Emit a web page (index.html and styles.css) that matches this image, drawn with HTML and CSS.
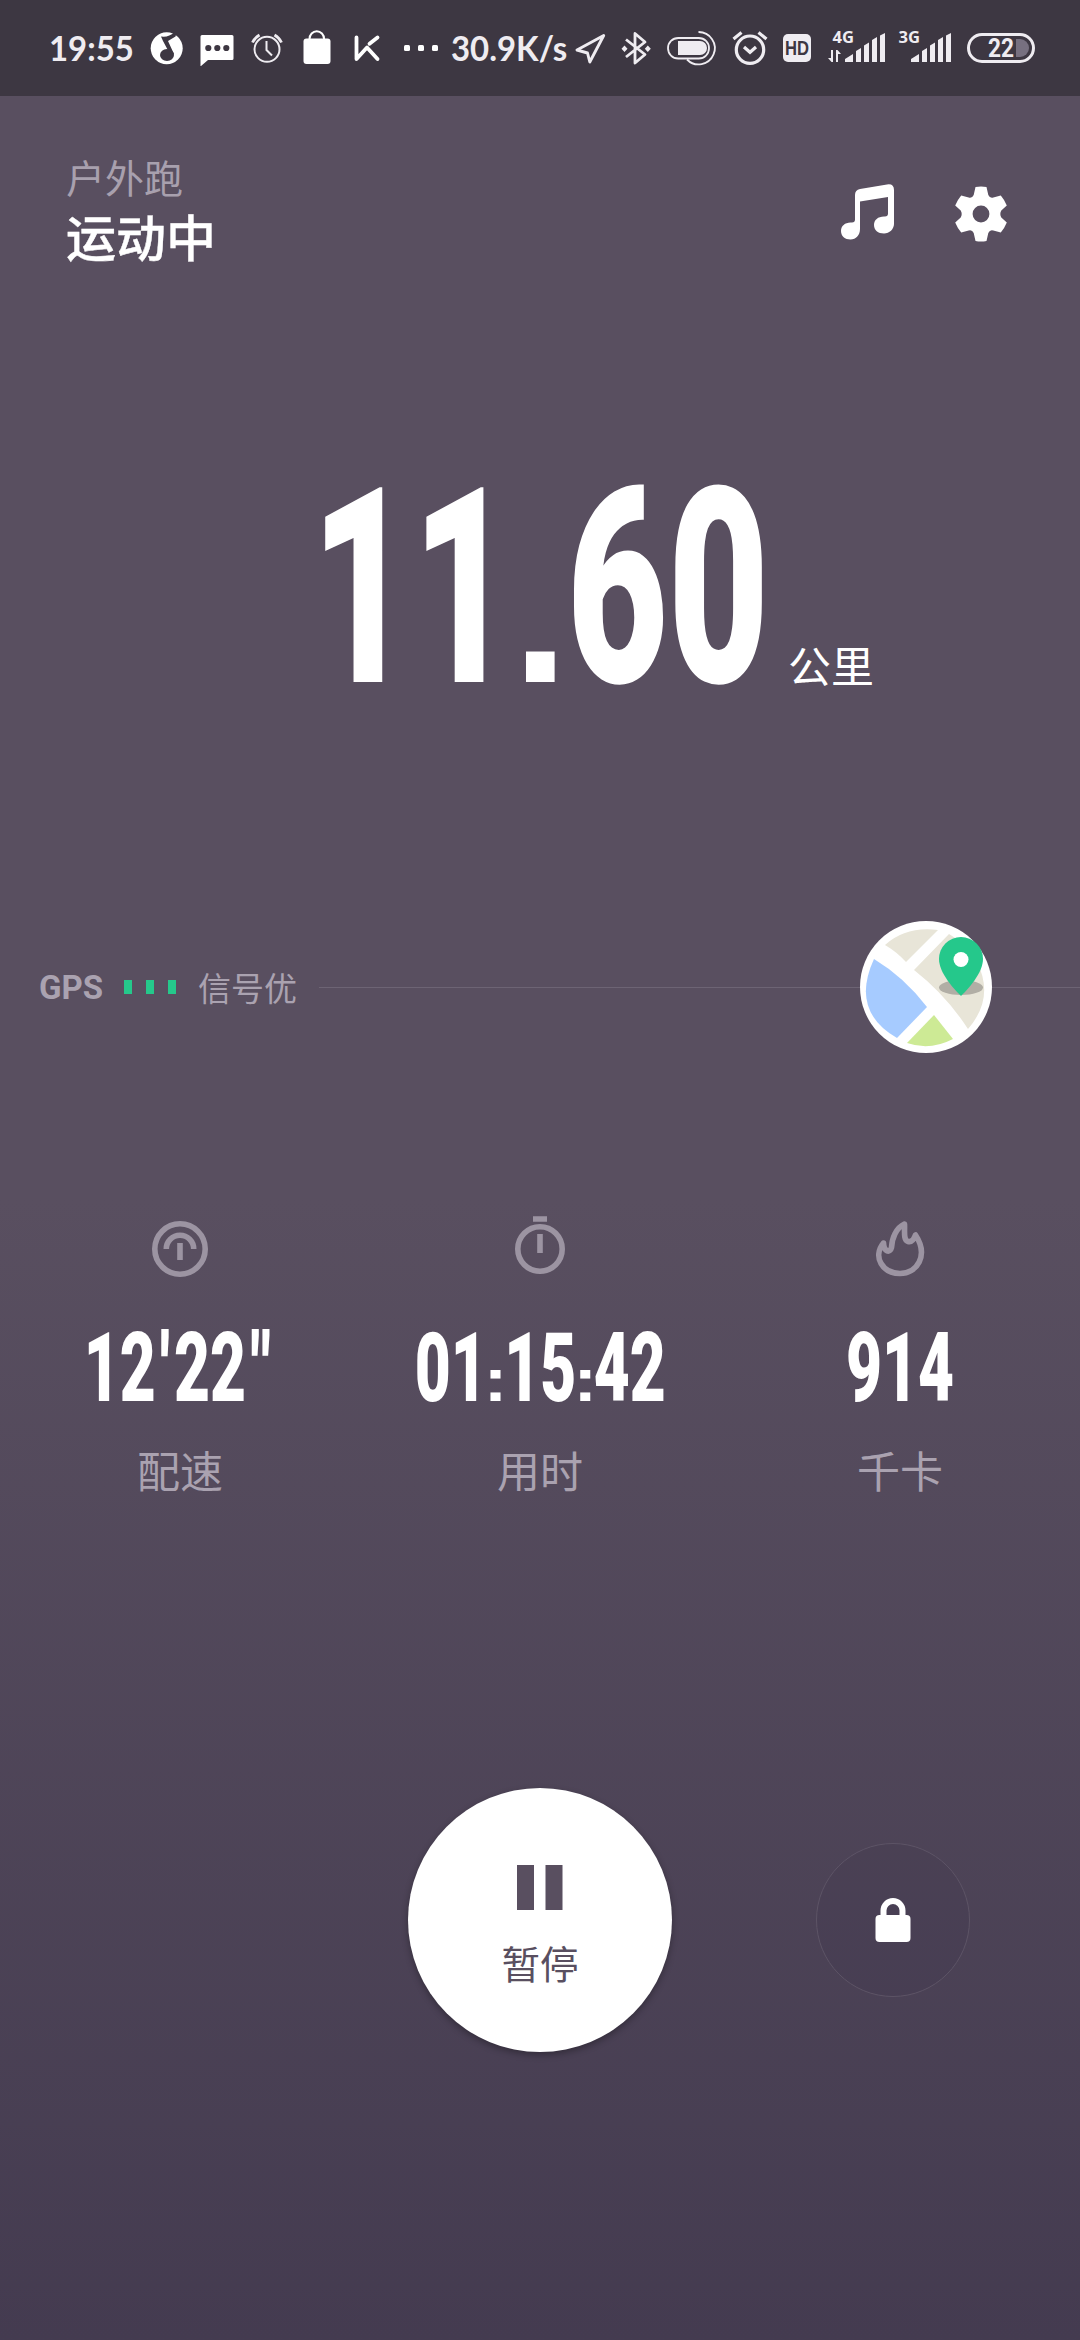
FILE: index.html
```html
<!DOCTYPE html>
<html lang="zh-CN">
<head>
<meta charset="utf-8">
<title>户外跑</title>
<link rel="stylesheet" href="styles.css">
</head>
<body>
<div class="screen">
  <header class="status">
    <span class="clock"><span class="fit">19:55</span></span>
    <svg width="50" height="96" viewBox="142 0 50 96"><circle cx="166.700" cy="48.300" r="16" fill="#fff"/><path d="M161 36.500q8 1 13-4l3-1-1.500 5-7.500 4.500 6 13-3 2-8-15z" fill="#3d3742"/><ellipse cx="167" cy="55" rx="7" ry="6" fill="#3d3742"/></svg>
    <svg width="50" height="96" viewBox="192 0 50 96"><path d="M202 35h30q1.500 0 1.500 1.500v22q0 1.500-1.500 1.500h-24l-7 6h-.500V36.500q0-1.500 1.500-1.500z" fill="#fff"/><g fill="#3d3742"><circle cx="208.300" cy="48" r="3.100"/><circle cx="217.300" cy="48" r="3.100"/><circle cx="226.300" cy="48" r="3.100"/></g></svg>
    <svg width="50" height="96" viewBox="242 0 50 96" fill="none" stroke="#efecf1" stroke-width="2"><circle cx="267" cy="49.300" r="12.500"/><path d="M266.500 41v9l5.500 5.500"/><path d="M252.500 42.500a17 17 0 0 1 7-7.500M274.500 35a17 17 0 0 1 7 7.500" stroke-width="2.800"/></svg>
    <svg width="50" height="96" viewBox="292 0 50 96"><rect x="303.500" y="38.500" width="27" height="25.500" rx="3" fill="#fff"/><path d="M309.500 40v-1a7.300 7.800 0 0 1 14.600 0v1" fill="none" stroke="#fff" stroke-width="2"/></svg>
    <svg width="48" height="96" viewBox="342 0 48 96" fill="none" stroke="#fff" stroke-width="3.800" stroke-linecap="round" stroke-linejoin="round"><path d="M356.500 37.500v21.500l10.500-11.500 10.500 11.500M369.500 43.800l8-6.300"/></svg>
    <svg width="55" height="96" viewBox="390 0 55 96" fill="#fff"><rect x="404" y="45" width="6" height="6" rx="1.500"/><rect x="418" y="45" width="6" height="6" rx="1.500"/><rect x="432" y="45" width="6" height="6" rx="1.500"/></svg>
    <span class="rate"><span class="fit">30.9K/s</span></span>
    <svg width="38" height="96" viewBox="572 0 38 96" fill="none" stroke="#efecf1" stroke-width="2.900" stroke-linejoin="round"><path d="M603.700 35.500L577 50l10.500 3 2.300 9z"/></svg>
    <svg width="52" height="96" viewBox="610 0 52 96" fill="none" stroke="#efecf1" stroke-width="2.800"><path d="M626 39.500l19 15-10 8.500V33.500l10 8.500-19 15" stroke-linejoin="round"/><path d="M624.500 45.500l3 3.200-3 3.200-3-3.200zM647.800 45.500l3 3.200-3 3.200-3-3.200z" fill="#efecf1" stroke="none"/></svg>
    <svg width="60" height="96" viewBox="662 0 60 96" fill="none" stroke="#efecf1" stroke-width="1.800"><rect x="668" y="38" width="41" height="20.500" rx="10.200"/><path d="M678 41h22a7 7 0 0 1 0 14h-22z" fill="#efecf1" stroke="none"/><path d="M698.500 32a16.200 16.200 0 1 1-11.500 27.500"/></svg>
    <svg width="54" height="96" viewBox="722 0 54 96" fill="none" stroke="#efecf1" stroke-width="3.200"><circle cx="750" cy="49.700" r="13.700"/><path d="M744 47l6 5.300 6-5.300M733.500 39l8-6.500M758.500 32.500l8 6.500"/></svg>
    <svg width="44" height="96" viewBox="776 0 44 96"><rect x="783" y="34" width="28" height="28" rx="5" fill="#efecf1"/><text x="797" y="55" class="hd" textLength="24" lengthAdjust="spacingAndGlyphs">HD</text></svg>
    <svg width="73" height="96" viewBox="820 0 73 96" fill="#efecf1"><text x="832.500" y="43" class="net" textLength="21.500" lengthAdjust="spacingAndGlyphs">4G</text><path d="M833 50v12h-1.500l-3.500-4h3V50zM836 62V50h1.500l3.500 4h-3v8zM845 62v-3l8-5v8zM856 62V51l5-3v14zM864 62V45.500l5-3V62zM872 62V40l5-3v25zM880 62V35.500l5-2.500v29z"/></svg>
    <svg width="67" height="96" viewBox="893 0 67 96" fill="#efecf1"><text x="898.500" y="43" class="net" textLength="21.500" lengthAdjust="spacingAndGlyphs">3G</text><path d="M911 62v-3l8-5v8zM922 62V51l5-3v14zM930 62V45.500l5-3V62zM938 62V40l5-3v25zM946 62V35.500l5-2.500v29z"/></svg>
    <svg width="90" height="96" viewBox="960 0 90 96"><rect x="968.500" y="34.500" width="65" height="27" rx="13.500" fill="none" stroke="#efecf1" stroke-width="3"/><path d="M1016 39h4a9 9 0 0 1 0 18h-4z" fill="#777080"/><text x="988" y="57" class="pct" textLength="26" lengthAdjust="spacingAndGlyphs">22</text></svg>
  </header>

  <section class="head">
    <div class="titles">
      <div class="mode">户外跑</div>
      <h1 class="state">运动中</h1>
    </div>
    <svg class="music" width="54" height="56" viewBox="0 0 54 56"><path fill="#fff" fill-rule="evenodd" d="M14 11q0-5 5-6L46 .5q7-1 7 5.500V40c0 5-4.500 9.500-10 9.500-6 0-10-3.500-10-8.500s4-8.500 10-8.500h1q3 0 3-3V13L19 17.500V45c0 6-4 10.500-9.500 10.500S0 52 0 47s4-8.500 9.500-8.500h1.500q3 0 3-3z"/></svg>
    <svg class="gear" width="54" height="56" viewBox="0 0 54 56"><path fill="#fff" fill-rule="evenodd" d="M21.500 1q5.500-1 11 0l1.800 8q1.500 3.500 5 2.500l7.500-2q3.800 4.500 6 10l-5.500 5q-2 3.500 0 7l5.500 5q-2.200 5.500-6 10l-7.500-2q-3.500-1-5 2.500l-1.800 8q-5.500 1-11 0l-1.800-8q-1.500-3.500-5-2.500l-7.500 2q-3.800-4.500-6-10l5.500-5q2-3.500 0-7l-5.500-5q2.200-5.500 6-10l7.500 2q3.500 1 5-2.500zM27 19.600a8.400 8.400 0 1 0 0 16.800 8.400 8.400 0 0 0 0-16.800z"/></svg>
  </section>

  <section class="distance">
    <div class="big"><span class="digits">11<span class="point">.</span>60</span></div>
    <div class="unit">公里</div>
  </section>

  <section class="gps">
    <span class="gps-name">GPS</span>
    <span class="bars"><i></i><i></i><i></i></span>
    <span class="signal">信号优</span>
    <span class="rule lead"></span>
    <svg class="map" width="132" height="132" viewBox="0 0 132 132">
      <circle cx="66" cy="66" r="66" fill="#fff"/>
      <path d="M25 24Q46 5 78 9L46 41Q37 31 25 24z" fill="#e8e5d8"/>
      <path d="M54 49L89 13q18 10 28 28 18 36-9 67Q86 74 54 49z" fill="#e8e5d8"/>
      <path d="M14 38Q44 56 67 86L37 117Q-10 90 14 38z" fill="#a6cbff"/>
      <path d="M74 94L93 118Q70 130 47 122z" fill="#cdea95"/>
      <ellipse cx="101" cy="66.500" rx="22" ry="7.500" fill="#b1aea5"/>
      <path d="M101 75C94 68 79 52 79 38a22 22 0 0 1 44 0c0 14-15 30-22 37z" fill="#25c88b"/>
      <circle cx="101" cy="38.500" r="7.500" fill="#fff"/>
    </svg>
    <span class="rule tail"></span>
  </section>

  <section class="stats">
    <div class="stat">
      <svg class="icon" width="64" height="64" viewBox="-32 -33 64 64"><circle r="25.200"/><path d="M-13.700 0a13.700 13.700 0 0 1 27.400 0M0-6v17"/></svg>
      <div class="value"><span class="squeeze">12<span class="minute">'</span>22<span class="second">"</span></span></div>
      <div class="label">配速</div>
    </div>
    <div class="stat">
      <svg class="icon" width="64" height="64" viewBox="-32 -33 64 64"><circle r="22.200"/><path d="M0-15V4M-7-30H7"/></svg>
      <div class="value"><span class="squeeze">01<span class="colon">:</span>15<span class="colon">:</span>42</span></div>
      <div class="label">用时</div>
    </div>
    <div class="stat">
      <svg class="icon" width="64" height="64" viewBox="-32 -33 64 64"><path stroke-linejoin="round" d="M-16.500-6C-28 8-17 24.500 0 24.500c17 0 29-18 15.500-38.500-1.500 4-4 7.500-7.500 6.500C3-9 5-18 4.500-25-4-21-8-11-8.500-1.500-10 4.500-16 3-16.500-6z"/></svg>
      <div class="value"><span class="squeeze">914</span></div>
      <div class="label">千卡</div>
    </div>
  </section>

  <section class="controls">
    <button class="pause">
      <svg width="46" height="45" viewBox="0 0 46 45" fill="#594f60"><path d="M0 0h17v45H0zM28.500 0h17v45h-17z"/></svg>
      <span>暂停</span>
    </button>
    <button class="lock">
      <svg width="36" height="44" viewBox="0 0 36 44"><rect x=".5" y="17" width="35" height="27" rx="4" fill="#fff"/><path d="M8.500 19v-6.500a9.500 9.500 0 0 1 19 0V19" fill="none" stroke="#fff" stroke-width="6"/></svg>
    </button>
  </section>
</div>
</body>
</html>
```
FILE: styles.css
```css
* { box-sizing: border-box; margin: 0; padding: 0; }
body { width: 1080px; height: 2340px; }
.screen {
  width: 1080px;
  height: 2340px;
  overflow: hidden;
  display: flex;
  flex-direction: column;
  background: linear-gradient(#594f60 0, #594f60 1200px, #443b50 2340px);
  color: #fff;
  font-family: Roboto, "Noto Sans CJK SC", sans-serif;
}
svg { display: block; flex: none; }

.status {
  flex: none;
  height: 96px;
  display: flex;
  align-items: center;
  padding-left: 49px;
  background: #3d3742;
  color: #efecf1;
  font: 700 34px/96px Lato, sans-serif;
}
.clock { width: 93px; }
.rate { width: 127px; padding-left: 6px; }
.fit { display: inline-block; white-space: nowrap; transform: scaleX(.968); transform-origin: 0 50%; }
.hd { font: 700 20px "Liberation Sans", sans-serif; fill: #3d3742; text-anchor: middle; }
.net { font: 700 16px "Open Sans", sans-serif; }
.pct { font: 700 25px Roboto, sans-serif; fill: #efecf1; }

.head {
  flex: none;
  height: 190px;
  display: flex;
  padding: 0 72px 0 66px;
}
.titles { flex: 1; padding-top: 59px; }
.mode { font-size: 39px; line-height: 50px; color: #a8a0ae; }
.state { font-size: 50px; line-height: 70px; font-weight: 500; -webkit-text-stroke: .4px #fff; }
.music { margin: 88px 59px 0 0; }
.gear { margin-top: 90px; }

.distance {
  flex: none;
  height: 524px;
  display: flex;
  padding: 205px 0 0 311px;
}
.big {
  width: 477px;
  height: 195px;
  font-size: 274px;
  line-height: 195px;
  font-weight: 900;
  white-space: nowrap;
}
.digits { display: inline-block; transform: scaleX(.637); transform-origin: 0 50%; }
.point {
  display: inline-block;
  width: 84px;
  line-height: 1;
  text-align: center;
  font-family: "Liberation Sans", sans-serif;
  font-size: 205px;
  transform: scaleX(1.55);
}
.unit { font-size: 43px; line-height: 60px; padding-top: 147px; }

.gps {
  flex: none;
  height: 132px;
  margin-top: 111px;
  display: flex;
  align-items: center;
  padding-left: 39px;
  color: #aaa2b0;
}
.gps-name { width: 85px; font-size: 33px; font-weight: 700; }
.bars { display: flex; gap: 14px; width: 74px; }
.bars i { width: 8px; height: 14px; background: #25c88b; }
.signal { width: 121px; font-size: 33px; }
.rule { height: 1px; background: #6d6474; }
.lead { width: 541px; }
.tail { flex: 1; }

.stats {
  flex: none;
  height: 454px;
  display: grid;
  grid-template-columns: repeat(3, 360px);
  padding-top: 163px;
}
.stat { display: flex; flex-direction: column; align-items: center; }
.icon { fill: none; stroke: #9c94a2; stroke-width: 5.600px; overflow: visible; }
.value {
  margin-top: 54px;
  height: 68px;
  font-size: 95.600px;
  line-height: 68px;
  font-weight: 900;
  white-space: nowrap;
}
.squeeze { display: inline-block; transform: scaleX(.65); }
.minute, .second, .colon { display: inline-block; text-align: center; }
.minute { width: 28px; }
.second { width: 46px; }
.colon {
  width: 27px;
  line-height: 1;
  font-family: "Liberation Sans", sans-serif;
  font-size: 62px;
  transform: scaleX(1.75);
}
.label { margin-top: 39px; font-size: 43px; line-height: 64px; color: #aaa2b0; }

.controls {
  flex: none;
  height: 264px;
  margin-top: 281px;
  padding-left: 408px;
  display: flex;
  align-items: center;
  gap: 144px;
}
button { border: 0; background: none; font-family: inherit; }
.pause {
  width: 264px;
  height: 264px;
  border-radius: 50%;
  background: #fff;
  color: #594f60;
  display: flex;
  flex-direction: column;
  align-items: center;
  padding-top: 77px;
  font-size: 38.500px;
  line-height: 56px;
  box-shadow: 0 3px 7px rgba(0, 0, 0, .3);
}
.pause span { margin-top: 28px; }
.lock {
  width: 154px;
  height: 154px;
  border-radius: 50%;
  border: 1px solid #5d5466;
  background: rgba(64, 55, 76, .22);
  display: flex;
  align-items: center;
  justify-content: center;
}
```
